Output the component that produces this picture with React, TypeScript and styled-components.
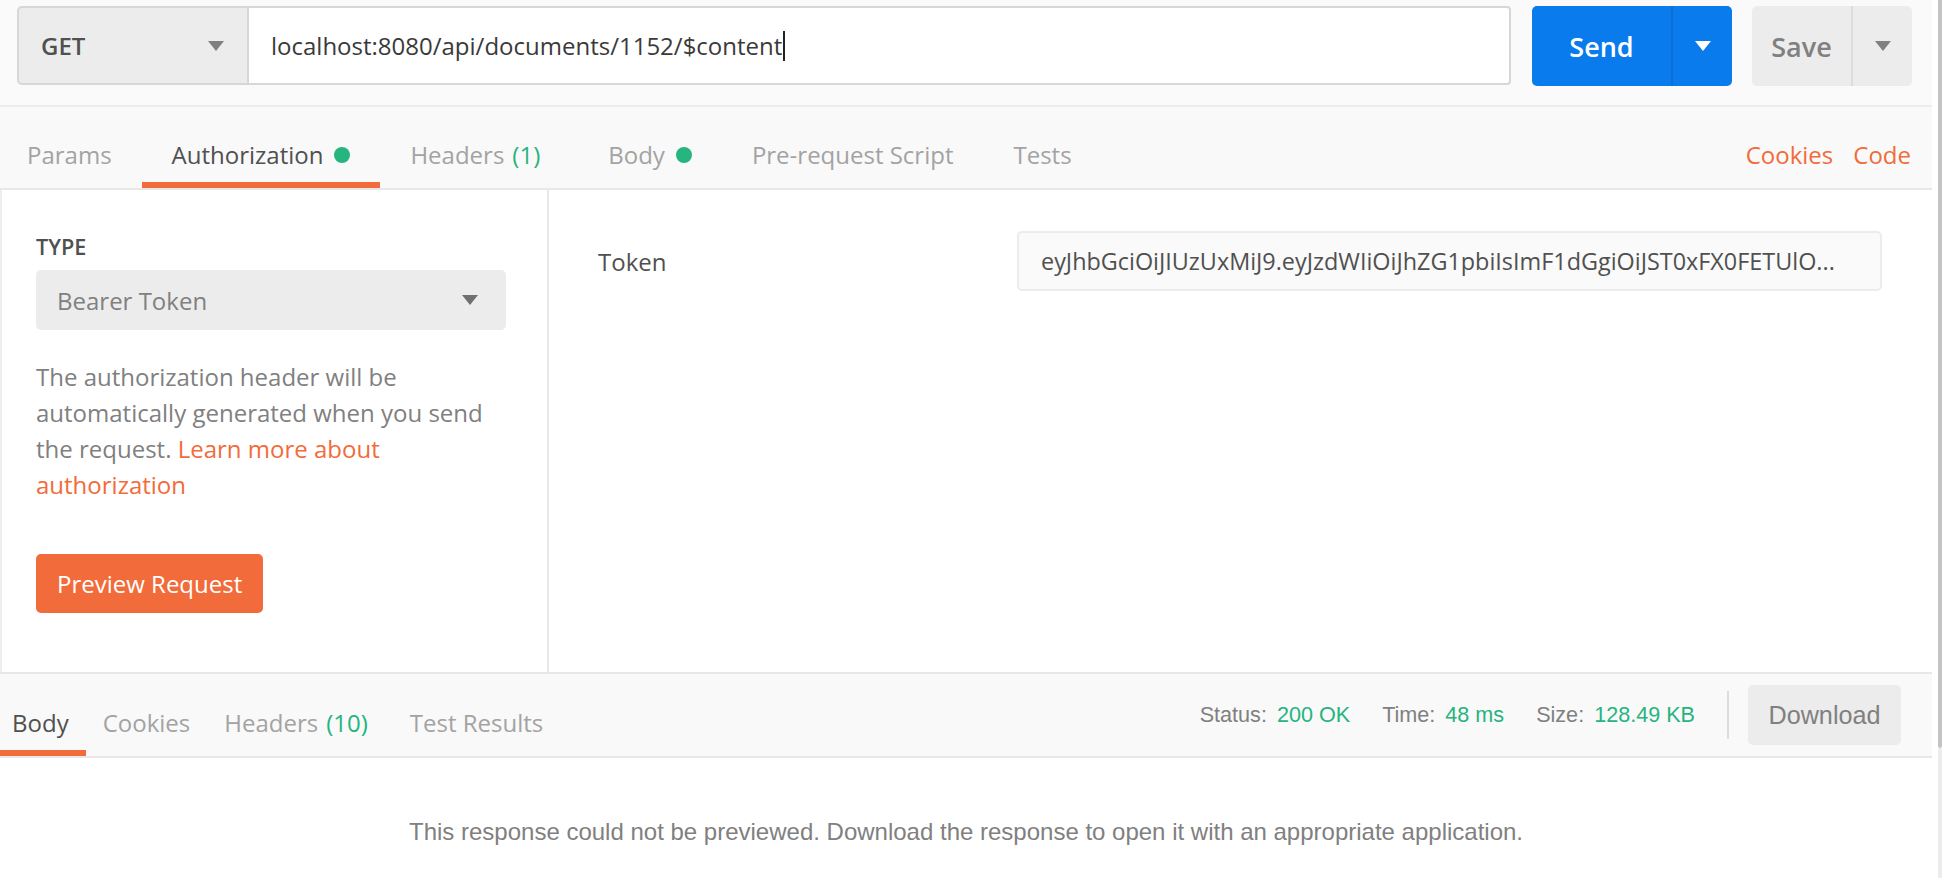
import React from "react";
import styled, { createGlobalStyle, css } from "styled-components";

const GlobalStyle = createGlobalStyle`
  html, body {
    margin: 0;
    padding: 0;
    background: #ffffff;
  }
  body {
    font-family: "Open Sans", "Liberation Sans", sans-serif;
    -webkit-font-smoothing: antialiased;
  }
  * { box-sizing: border-box; }
`;

const ORANGE = "#f26b3a";
const GREEN = "#26b47f";
const DARK = "#505050";
const MID = "#808080";
const LIGHT = "#a3a3a3";
const BASE = "24px";

const Page = styled.div`
  display: flex;
  width: 1942px;
  height: 878px;
  overflow: hidden;
  background: #fff;
`;

const Main = styled.div`
  flex: 1;
  display: flex;
  flex-direction: column;
  min-width: 0;
  background: #fafafa;
`;

const ScrollTrack = styled.div`
  width: 10px;
  display: flex;
  justify-content: flex-end;
  background: #ffffff;
`;

const Rail = styled.div`
  width: 4px;
  display: flex;
  flex-direction: column;
`;

const Thumb = styled.div`
  height: 748px;
  background: #c3c3c3;
  border-radius: 0 0 2px 2px;
`;

const RailRest = styled.div`
  flex: 1;
  background: #ececec;
`;

/* ---------- top request bar ---------- */

const TopBar = styled.div`
  height: 107px;
  display: flex;
  align-items: flex-start;
  padding: 6px 20px 0 17px;
  border-bottom: 2px solid #ececec;
  background: #fafafa;
`;

const RequestGroup = styled.div`
  flex: 1;
  display: flex;
  height: 79px;
  min-width: 0;
`;

const MethodSelect = styled.div`
  width: 232px;
  display: flex;
  align-items: center;
  justify-content: space-between;
  padding: 0 23px 0 22px;
  background: #ececec;
  border: 2px solid #d7d7d7;
  border-radius: 5px 0 0 5px;
  font-size: ${BASE};
  font-weight: 600;
  color: ${DARK};
`;

const Caret = styled.span<{ $color: string }>`
  display: inline-block;
  width: 0;
  height: 0;
  border-left: 8px solid transparent;
  border-right: 8px solid transparent;
  border-top: 10px solid ${(p) => p.$color};
`;

const UrlInput = styled.div`
  flex: 1;
  display: flex;
  align-items: center;
  padding-left: 22px;
  background: #ffffff;
  border: 2px solid #d7d7d7;
  border-left: 0;
  border-radius: 0 4px 4px 0;
  font-size: ${BASE};
  color: #3a3a3a;
  white-space: nowrap;
  overflow: hidden;
`;

const CursorText = styled.span`
  border-right: 2px solid #222;
  padding-right: 1px;
  line-height: 30px;
`;

const SplitButton = styled.div<{ $variant: "send" | "save" }>`
  display: flex;
  height: 80px;
  border-radius: 5px;
  overflow: hidden;
  font-size: 27px;
  font-weight: 600;
  ${(p) =>
    p.$variant === "send"
      ? css`
          margin-left: 21px;
          background: #097bed;
          color: #ffffff;
        `
      : css`
          margin-left: 20px;
          background: #ececec;
          color: ${MID};
        `}
`;

const SplitMain = styled.div<{ $width: number }>`
  width: ${(p) => p.$width}px;
  display: flex;
  align-items: center;
  justify-content: center;
`;

const SplitArrow = styled.div<{ $divider: string }>`
  width: 61px;
  display: flex;
  align-items: center;
  justify-content: center;
  border-left: 2px solid ${(p) => p.$divider};
`;

/* ---------- request tabs ---------- */

const TabBar = styled.div`
  height: 83px;
  display: flex;
  align-items: stretch;
  padding-right: 21px;
  background: #f9f9f9;
  border-bottom: 2px solid #e8e8e8;
`;

const TabList = styled.div`
  flex: 1;
  display: flex;
  align-items: stretch;
`;

const Tab = styled.div<{ $active?: boolean; $small?: boolean }>`
  display: flex;
  align-items: center;
  padding: ${(p) => (p.$small ? "20px 17px 0" : "19px 30px 0")};
  font-size: ${BASE};
  color: ${(p) => (p.$active ? DARK : LIGHT)};
  border-bottom: 6px solid ${(p) => (p.$active ? ORANGE : "transparent")};
  white-space: nowrap;
  &:first-child {
    padding-left: ${(p) => (p.$small ? "12px" : "27px")};
  }
`;

const Count = styled.span`
  color: ${GREEN};
  margin-left: 8px;
  margin-right: 8px;
`;

const Dot = styled.span`
  width: 16px;
  height: 16px;
  border-radius: 50%;
  background: ${GREEN};
  margin-left: 11px;
  margin-top: 2px;
`;

const LinkGroup = styled.div`
  display: flex;
  align-items: center;
  gap: 20px;
  padding-top: 19px;
  padding-bottom: 6px;
`;

const OrangeLink = styled.span`
  font-size: ${BASE};
  color: ${ORANGE};
`;

/* ---------- panels ---------- */

const Panels = styled.div`
  height: 484px;
  display: flex;
  background: #ffffff;
  border-bottom: 2px solid #e8e8e8;
`;

const LeftPanel = styled.div`
  width: 549px;
  padding: 42px 41px 0 34px;
  border-left: 2px solid #eeeeee;
  border-right: 2px solid #e8e8e8;
  display: flex;
  flex-direction: column;
  align-items: flex-start;
`;

const SectionLabel = styled.div`
  font-size: 21.6px;
  font-weight: 600;
  color: ${DARK};
  line-height: 30px;
`;

const TypeSelect = styled.div`
  align-self: stretch;
  margin-top: 8px;
  height: 60px;
  display: flex;
  align-items: center;
  justify-content: space-between;
  padding: 0 28px 0 21px;
  background: #ececec;
  border-radius: 5px;
  font-size: ${BASE};
  color: ${MID};
`;

const HelpText = styled.p`
  margin: 29px 0 0;
  font-size: ${BASE};
  line-height: 36px;
  color: ${MID};
`;

const InlineLink = styled.span`
  color: ${ORANGE};
`;

const PrimaryButton = styled.div`
  margin-top: 51px;
  height: 59px;
  padding: 0 21px;
  display: flex;
  align-items: center;
  background: ${ORANGE};
  color: #ffffff;
  border-radius: 5px;
  font-size: ${BASE};
`;

const RightPanel = styled.div`
  flex: 1;
  padding: 41px 50px 0 49px;
`;

const FieldRow = styled.div`
  display: grid;
  grid-template-columns: 419px 1fr;
  align-items: center;
`;

const FieldLabel = styled.div`
  font-size: ${BASE};
  color: ${DARK};
`;

const FieldValue = styled.div`
  height: 60px;
  line-height: 56px;
  padding: 0 20px 0 22px;
  background: #fafafa;
  border: 2px solid #ececec;
  border-radius: 5px;
  font-size: 23.4px;
  color: ${DARK};
  white-space: nowrap;
  overflow: hidden;
  text-overflow: ellipsis;
`;

/* ---------- response ---------- */

const ResponseBar = styled.div`
  height: 84px;
  display: flex;
  align-items: stretch;
  justify-content: space-between;
  padding-right: 31px;
  background: #f9f9f9;
  border-bottom: 2px solid #e8e8e8;
`;

const Meta = styled.div`
  display: flex;
  align-items: center;
  font-family: "Liberation Sans", Arial, sans-serif;
  font-size: 21.6px;
`;

const MetaItem = styled.span`
  color: ${MID};
  & + & {
    margin-left: 32px;
  }
`;

const MetaValue = styled.span`
  color: ${GREEN};
  margin-left: 10px;
`;

const Separator = styled.span`
  width: 2px;
  height: 48px;
  background: #dddddd;
  margin: 0 19px 0 32px;
`;

const GhostButton = styled.div`
  height: 60px;
  width: 153px;
  display: flex;
  align-items: center;
  justify-content: center;
  background: #ececec;
  border-radius: 5px;
  color: ${MID};
  font-size: 25.2px;
`;

const ResponseBody = styled.div`
  flex: 1;
  background: #ffffff;
  padding-top: 59px;
  text-align: center;
  font-family: "Liberation Sans", Arial, sans-serif;
  font-size: 24px;
  line-height: 30px;
  color: ${MID};
`;

export default function App() {
  return (
    <>
      <GlobalStyle />
      <Page>
        <Main>
          <TopBar>
            <RequestGroup>
              <MethodSelect>
                GET
                <Caret $color="#808080" />
              </MethodSelect>
              <UrlInput>
                <CursorText>localhost:8080/api/documents/1152/$content</CursorText>
              </UrlInput>
            </RequestGroup>
            <SplitButton $variant="send">
              <SplitMain $width={139}>Send</SplitMain>
              <SplitArrow $divider="#0b6fd4">
                <Caret $color="#ffffff" />
              </SplitArrow>
            </SplitButton>
            <SplitButton $variant="save">
              <SplitMain $width={99}>Save</SplitMain>
              <SplitArrow $divider="#dcdcdc">
                <Caret $color="#808080" />
              </SplitArrow>
            </SplitButton>
          </TopBar>

          <TabBar>
            <TabList>
              <Tab>Params</Tab>
              <Tab $active>
                Authorization
                <Dot />
              </Tab>
              <Tab>
                Headers<Count>(1)</Count>
              </Tab>
              <Tab>
                Body
                <Dot />
              </Tab>
              <Tab>Pre-request Script</Tab>
              <Tab>Tests</Tab>
            </TabList>
            <LinkGroup>
              <OrangeLink>Cookies</OrangeLink>
              <OrangeLink>Code</OrangeLink>
            </LinkGroup>
          </TabBar>

          <Panels>
            <LeftPanel>
              <SectionLabel>TYPE</SectionLabel>
              <TypeSelect>
                Bearer Token
                <Caret $color="#707070" />
              </TypeSelect>
              <HelpText>
                The authorization header will be automatically generated when you send the request.{" "}
                <InlineLink>Learn more about authorization</InlineLink>
              </HelpText>
              <PrimaryButton>Preview Request</PrimaryButton>
            </LeftPanel>
            <RightPanel>
              <FieldRow>
                <FieldLabel>Token</FieldLabel>
                <FieldValue>eyJhbGciOiJIUzUxMiJ9.eyJzdWIiOiJhZG1pbiIsImF1dGgiOiJST0xFX0FETUlO...</FieldValue>
              </FieldRow>
            </RightPanel>
          </Panels>

          <ResponseBar>
            <TabList>
              <Tab $small $active>Body</Tab>
              <Tab $small>Cookies</Tab>
              <Tab $small>
                Headers<Count>(10)</Count>
              </Tab>
              <Tab $small>Test Results</Tab>
            </TabList>
            <Meta>
              <MetaItem>
                Status:<MetaValue>200 OK</MetaValue>
              </MetaItem>
              <MetaItem>
                Time:<MetaValue>48 ms</MetaValue>
              </MetaItem>
              <MetaItem>
                Size:<MetaValue>128.49 KB</MetaValue>
              </MetaItem>
              <Separator />
              <GhostButton>Download</GhostButton>
            </Meta>
          </ResponseBar>

          <ResponseBody>
            This response could not be previewed. Download the response to open it with an appropriate application.
          </ResponseBody>
        </Main>
        <ScrollTrack>
          <Rail>
            <Thumb />
            <RailRest />
          </Rail>
        </ScrollTrack>
      </Page>
    </>
  );
}
